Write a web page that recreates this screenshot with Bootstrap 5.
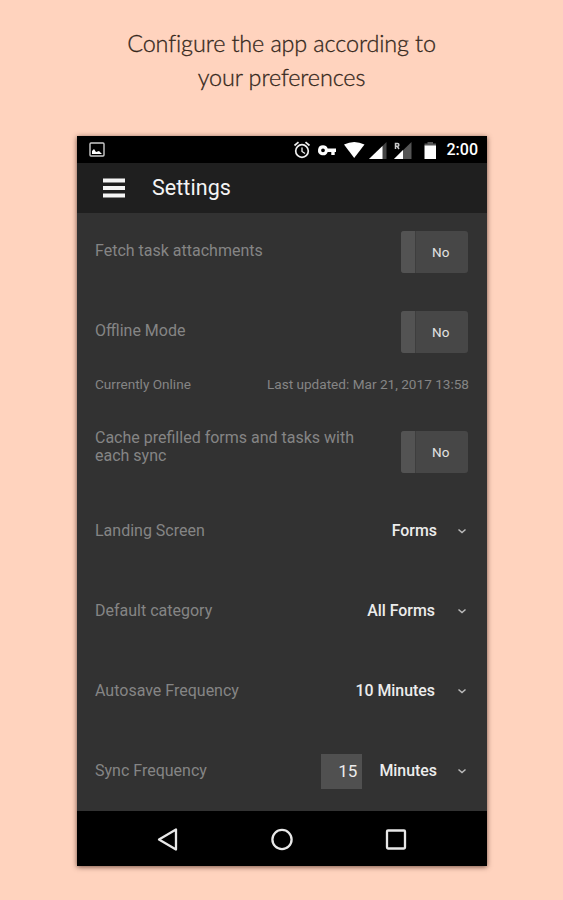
<!DOCTYPE html>
<html lang="en">
<head>
<meta charset="utf-8">
<meta name="viewport" content="width=device-width, initial-scale=1">
<title>Settings</title>
<link href="https://cdn.jsdelivr.net/npm/bootstrap@5.3.0/dist/css/bootstrap.min.css" rel="stylesheet">
<style>
body{background:#ffd3be;font-family:Roboto,"Liberation Sans",sans-serif;height:900px;overflow:hidden}
.headline{font:300 23.4px/34px Lato,"Open Sans",sans-serif;color:#35281c;height:136px;padding-top:26px;letter-spacing:-.12px;-webkit-text-stroke:.3px #35281c}
.phone{width:410px;height:730px;margin-left:77px;background:#323232;box-shadow:0 1px 5px rgba(70,35,25,.75)}
.status-bar{height:27px;padding:0 9px 0 12px;font-size:16px;font-weight:500;line-height:27px}
.status-bar svg{display:block;flex:none}
.app-bar{height:50px;background:#1f1f1f;padding-left:26px;gap:27px;font-size:21.5px;color:#f4f4f4;letter-spacing:.05px}
.settings{height:598px;padding:0 18px;color:#858585;font-size:16px}
.setting{height:80px;line-height:18px}
.setting:first-child{height:78px;padding-bottom:2px}
.sync-state{height:40px;font-size:13.6px;padding-bottom:13px}
.toggle{width:67px;height:42px;background:#474747;border-radius:3px;color:#e2e2e2;font-size:13.5px;margin:1px 1px 0 0;overflow:hidden}
.toggle-knob{width:15px;background:#535353;border-right:1px solid #3e3e3e}
.choice{color:#ececec;font-weight:500;font-size:15.9px;margin-right:17px}
.choice-mid{margin-right:19px}
.chevron{margin-right:1px}
.amount{width:41px;height:35px;background:#505050;color:#ececec;font-size:17px;padding-right:5px;margin-right:17px}
.nav-keys{height:55px}
.nav-keys svg{display:block}
</style>
</head>
<body>
<h1 class="headline text-center mb-0">Configure the app according to<br>your preferences</h1>
<main class="phone d-flex flex-column">
  <div class="status-bar bg-black text-white d-flex align-items-center">
    <svg width="16" height="16" viewBox="0 0 16 16"><rect x="1" y="1" width="14" height="13" rx="1" fill="none" stroke="#ccc" stroke-width="1.4"/><path d="M3 12V9l2-2 2 3 3-1 3 3z" fill="#fff"/></svg>
    <svg class="ms-auto" width="154" height="20" viewBox="293 139 154 20" fill="#fff">
      <g fill="none" stroke="#eee" stroke-width="1.700"><circle cx="302" cy="150" r="6.300"/><path d="M294.500 144.500l4-3.300M309.500 144.500l-4-3.300"/><path d="M302 146.500v4l3 2" stroke-width="1.300"/></g>
      <path fill-rule="evenodd" d="M323 144.300a5 5 0 0 1 4.700 3.200H336v3.500h-1.300v3h-3.400v-3h-3.600a5 5 0 1 1-4.700-6.700zM323 147.400a1.900 1.900 0 1 0 0 3.800 1.900 1.900 0 0 0 0-3.800z"/>
      <path d="M344 143.500Q354.300 138.500 364.500 143.500L354.200 157z"/>
      <path d="M386.500 141v17H369z" fill="#444"/><path d="M382.500 145v13H369z"/>
      <path d="M411.500 141v17H394z" fill="#555"/><path d="M403 149v9h-9z"/>
      <path d="M395.500 148v-5.500h2a1.400 1.400 0 0 1 0 2.800h-2m1.700 0l1.800 2.700" fill="none" stroke="#ccc" stroke-width="1.500"/>
      <path d="M424.500 142.500h3V141h5.500v1.500h3v2.500h-11.500z" fill="#555"/><path d="M424.500 144.500H436V158h-11.500z"/>
    </svg>
    <span>2:00</span>
  </div>
  <header class="app-bar d-flex align-items-center">
    <svg width="22" height="20" viewBox="0 0 22 20"><path d="M0 2.500h22M0 10h22M0 17.500h22" stroke="#f5f5f5" stroke-width="4"/></svg>
    <span>Settings</span>
  </header>
  <section class="settings">
    <div class="setting d-flex align-items-center justify-content-between"><span>Fetch task attachments</span><div class="toggle d-flex"><span class="toggle-knob"></span><span class="flex-grow-1 d-flex align-items-center ps-3">No</span></div></div>
    <div class="setting d-flex align-items-center justify-content-between"><span>Offline Mode</span><div class="toggle d-flex"><span class="toggle-knob"></span><span class="flex-grow-1 d-flex align-items-center ps-3">No</span></div></div>
    <div class="sync-state d-flex align-items-center justify-content-between"><span>Currently Online</span><span>Last updated: Mar 21, 2017 13:58</span></div>
    <div class="setting d-flex align-items-center justify-content-between"><span class="pb-2">Cache prefilled forms and tasks with<br>each sync</span><div class="toggle d-flex"><span class="toggle-knob"></span><span class="flex-grow-1 d-flex align-items-center ps-3">No</span></div></div>
    <div class="setting d-flex align-items-center"><span>Landing Screen</span><span class="choice ms-auto">Forms</span><svg class="chevron" width="14" height="10" viewBox="0 0 14 10"><path d="M4.500 3.500l3.500 3 3.500-3" fill="none" stroke="#bbb" stroke-width="1.500"/></svg></div>
    <div class="setting d-flex align-items-center"><span>Default category</span><span class="choice choice-mid ms-auto">All Forms</span><svg class="chevron" width="14" height="10" viewBox="0 0 14 10"><path d="M4.500 3.500l3.500 3 3.500-3" fill="none" stroke="#bbb" stroke-width="1.500"/></svg></div>
    <div class="setting d-flex align-items-center"><span>Autosave Frequency</span><span class="choice choice-mid ms-auto">10 Minutes</span><svg class="chevron" width="14" height="10" viewBox="0 0 14 10"><path d="M4.500 3.500l3.500 3 3.500-3" fill="none" stroke="#bbb" stroke-width="1.500"/></svg></div>
    <div class="setting d-flex align-items-center"><span>Sync Frequency</span><span class="amount ms-auto d-flex align-items-center justify-content-end">15</span><span class="choice">Minutes</span><svg class="chevron" width="14" height="10" viewBox="0 0 14 10"><path d="M4.500 3.500l3.500 3 3.500-3" fill="none" stroke="#bbb" stroke-width="1.500"/></svg></div>
  </section>
  <nav class="nav-keys bg-black d-flex align-items-center justify-content-center">
    <svg width="250" height="26" viewBox="0 0 250 26" fill="none" stroke="#e8e8e8" stroke-width="2.300" stroke-linejoin="round"><path d="M19 3.500v20L2 13.500z"/><circle cx="125" cy="13.500" r="9.600"/><rect x="230" y="4.500" width="18" height="18" rx="1"/></svg>
  </nav>
</main>
<script src="https://cdn.jsdelivr.net/npm/bootstrap@5.3.0/dist/js/bootstrap.bundle.min.js"></script>
</body>
</html>
